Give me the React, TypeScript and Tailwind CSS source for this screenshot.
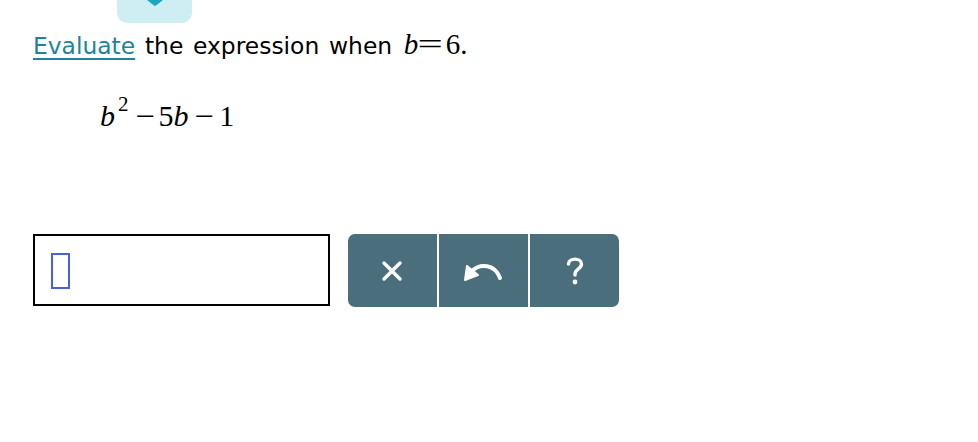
export default function App() {
  return (
    <div className="relative h-[442px] w-[978px] overflow-hidden bg-white" style={{ fontFamily: '"DejaVu Sans", Verdana, sans-serif' }}>
      <div className="absolute left-[117px] top-0 flex h-[23px] w-[75px] justify-center rounded-b-[10px] bg-[#cfeef4]">
        <svg width="20" height="6" viewBox="0 0 20 6">
          <path d="M2 0 L9 5.5 Q10 6.2 11 5.5 L18 0 Z" fill="#1aa5c1" />
        </svg>
      </div>

      <div className="pl-[33px] pt-[30px]">
        <p className="flex items-baseline text-[23.4px] leading-[28px] text-black [word-spacing:2.3px]">
          <span className="text-[#21829a] underline decoration-[1.5px] underline-offset-[4px]">Evaluate</span>
          <span className="whitespace-pre"> the expression when </span>
          <span className="ml-[2px] text-[29px] [word-spacing:0]" style={{ fontFamily: '"Liberation Serif", serif' }}>
            <i>b</i>
            <span className="ml-[4px] inline-block scale-x-[1.55]">=</span>
            <span className="ml-[7px]">6.</span>
          </span>
        </p>

        <div className="mt-[41px] pl-[67px] text-[30px] leading-[30px] text-black" style={{ fontFamily: '"Liberation Serif", serif' }}>
          <i>b</i>
          <sup className="relative -top-[15px] ml-[3px] text-[21px]">2</sup>
          <span className="ml-[8px] inline-block scale-x-[1.15]">−</span>
          <span className="ml-[5px]">5</span>
          <i>b</i>
          <span className="ml-[8px] inline-block scale-x-[1.15]">−</span>
          <span className="ml-[6px]">1</span>
        </div>

        <div className="mt-[103px] flex items-start gap-[18px]">
          <div className="flex h-[72px] w-[297px] items-center border-2 border-black pl-[16px]">
            <div className="mt-[2px] h-[36px] w-[19px] border-2 border-[#4b5fd6]" />
          </div>
          <div className="flex h-[73px] w-[271px] overflow-hidden rounded-[7px] bg-[#4a6e7b]">
            <button className="flex flex-1 items-center justify-center border-r-2 border-white">
              <svg width="22" height="22" viewBox="0 0 22 22" className="-ml-[2px]">
                <path d="M3 3 L19 19 M19 3 L3 19" stroke="white" strokeWidth="3.4" strokeLinecap="round" />
              </svg>
            </button>
            <button className="flex flex-1 items-center justify-center border-r-2 border-white">
              <svg width="42" height="26" viewBox="0 0 42 26" className="-ml-[2px]">
                <path d="M38 20 C33 6 18 5 10 13" stroke="white" strokeWidth="4" fill="none" strokeLinecap="round" />
                <path d="M3 22 L5 8 L16 17 Z" fill="white" stroke="white" strokeWidth="2" strokeLinejoin="round" />
              </svg>
            </button>
            <button className="flex flex-1 items-center justify-center">
              <svg width="20" height="30" viewBox="0 0 20 30">
                <path d="M3.5 8 C3.5 1.5 16.5 1.5 16.5 8 C16.5 13 10 13 10 18 V19" stroke="white" strokeWidth="3.4" fill="none" strokeLinecap="round" />
                <circle cx="10" cy="26" r="2.4" fill="white" />
              </svg>
            </button>
          </div>
        </div>
      </div>
    </div>
  )
}
